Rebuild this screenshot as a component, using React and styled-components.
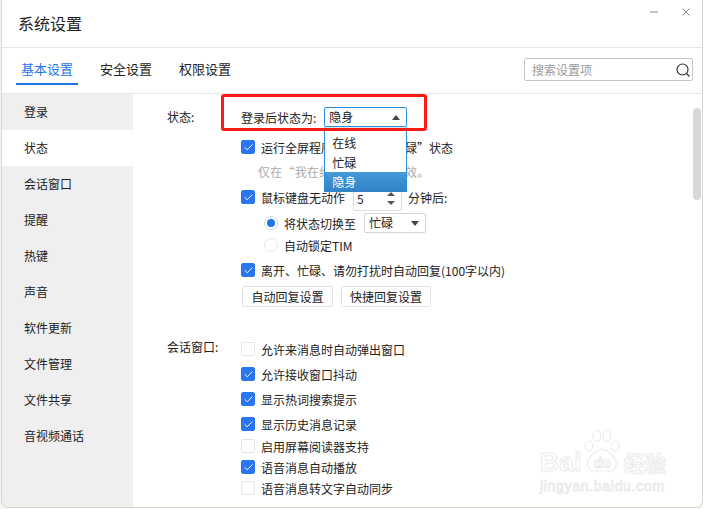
import React from 'react';
import styled, { createGlobalStyle } from 'styled-components';
import { Check } from 'lucide-react';

const GlobalStyle = createGlobalStyle`
  html, body {
    margin: 0;
    padding: 0;
    height: 100%;
    overflow: hidden;
    background: #f6f6f4;
  }
  * { box-sizing: border-box; }
`;

const Shell = styled.div`
  position: relative;
  width: 700px;
  height: 507px;
  margin-left: 2px;
  background: #fff;
  color: #222;
  font-family: "Noto Sans CJK SC", "Liberation Sans", sans-serif;
  font-size: 12px;
  overflow: hidden;
  border-radius: 0 0 6px 6px;
  box-shadow: 0 0 0 1px #d6d6cc;
  display: flex;
  flex-direction: column;
`;

const TitleBar = styled.div`
  height: 48px;
  flex: none;
  display: flex;
  align-items: flex-start;
  justify-content: space-between;
  border-bottom: 1px solid #e6e6e6;
`;

const Title = styled.div`
  font-size: 16px;
  line-height: 22px;
  margin: 12px 0 0 16px;
`;

const WinButtons = styled.div`
  display: flex;
  gap: 24px;
  margin: 8px 12px 0 0;
  color: #888;
`;

const TabBar = styled.div`
  height: 46px;
  flex: none;
  display: flex;
  border-bottom: 1px solid #e6e6e6;
  padding: 0 9px 0 14px;
`;

const Tab = styled.div`
  width: ${p => p.$w}px;
  margin-right: ${p => p.$gap}px;
  height: 37px;
  padding-top: 10px;
  font-size: 13px;
  line-height: 22px;
  text-align: center;
  color: ${p => (p.$active ? '#1f74e8' : '#222')};
  border-bottom: 2px solid ${p => (p.$active ? '#1f74e8' : 'transparent')};
`;

const SearchBox = styled.div`
  width: 169px;
  height: 23px;
  margin: 10px 0 0 auto;
  border: 1px solid #c6c6c6;
  border-radius: 2px;
  display: flex;
  align-items: center;
  justify-content: space-between;
  padding: 0 0 0 7px;
  color: #9a9a9a;
`;

const Body = styled.div`
  flex: 1;
  min-height: 0;
  display: flex;
`;

const Sidebar = styled.div`
  width: 131px;
  flex: none;
  background: #efefef;
`;

const SideItem = styled.div`
  height: 36px;
  line-height: 36px;
  padding-left: 22px;
  background: ${p => (p.$active ? '#fff' : 'transparent')};
`;

const Content = styled.div`
  flex: 1;
  position: relative;
  padding-top: 13px;
`;

const Section = styled.div`
  display: grid;
  grid-template-columns: 74px 1fr;
  padding-left: 34px;
  margin-top: ${p => p.$top || 0}px;
`;

const SectionLabel = styled.div`
  line-height: 20px;
  margin-top: ${p => p.$top || 0}px;
`;

const Options = styled.div`
  display: flex;
  flex-direction: column;
`;

const Row = styled.div`
  height: 20px;
  display: flex;
  align-items: center;
  margin-top: ${p => p.$top || 0}px;
  margin-left: ${p => p.$indent || 0}px;
`;

const Box = styled.span`
  width: 14px;
  height: 14px;
  flex: none;
  margin-right: 6px;
  border-radius: 2px;
  display: flex;
  align-items: center;
  justify-content: center;
  color: #fff;
  background: ${p => (p.$on ? '#2a76f2' : '#fff')};
  border: 1px solid ${p => (p.$on ? '#2a76f2' : '#e4e4e4')};
`;

const Radio = styled.span`
  width: 14px;
  height: 14px;
  flex: none;
  margin-right: 6px;
  border-radius: 50%;
  display: flex;
  align-items: center;
  justify-content: center;
  background: #fff;
  border: 1px solid ${p => (p.$on ? '#c9d9f5' : '#e6e6e6')};

  &::after {
    content: '';
    width: 8px;
    height: 8px;
    border-radius: 50%;
    background: ${p => (p.$on ? '#1f74e8' : 'transparent')};
  }
`;

const Hint = styled.span`
  color: #aaa;
  margin-left: 17px;
  letter-spacing: 0.25px;
`;

const Select = styled.div`
  position: relative;
  width: ${p => p.$w}px;
  height: 20px;
  margin-left: ${p => p.$left || 0}px;
  border: 1px solid ${p => (p.$open ? '#2a8fe0' : '#d4d4d4')};
  border-radius: 2px;
  display: flex;
  align-items: center;
  justify-content: space-between;
  padding: 0 6px 0 4px;
  line-height: 18px;
  background: #fff;
`;

const Caret = styled.span`
  width: 0;
  height: 0;
  border-left: 4.5px solid transparent;
  border-right: 4.5px solid transparent;
  ${p => (p.$up ? 'border-bottom: 5px solid #444;' : 'border-top: 5px solid #444;')}
`;

const DropList = styled.div`
  position: absolute;
  z-index: 3;
  top: 19px;
  left: -1px;
  width: 83px;
  height: 65px;
  padding-top: 5px;
  background: #fff;
  border: 1px solid #2a8fe0;
  border-top-color: #d8e6f2;
`;

const DropItem = styled.div`
  height: 19.5px;
  line-height: 19.5px;
  padding-left: 7px;
  color: ${p => (p.$active ? '#fff' : '#222')};
  background: ${p => (p.$active ? 'linear-gradient(#459ad8, #2f83c6)' : 'transparent')};
`;

const Spinner = styled.div`
  width: 49px;
  height: 25px;
  margin: 3px 6px 0 8px;
  border: 1px solid #dcdcdc;
  border-radius: 2px;
  display: flex;
  align-items: flex-start;
  justify-content: space-between;
  padding: 0 6px 0 3px;
  line-height: 23px;
  background: #fff;
`;

const SpinArrows = styled.span`
  display: flex;
  flex-direction: column;
  gap: 5px;
  margin-top: 5px;
`;

const SmallCaret = styled.span`
  width: 0;
  height: 0;
  border-left: 4px solid transparent;
  border-right: 4px solid transparent;
  ${p => (p.$up ? 'border-bottom: 4px solid #555;' : 'border-top: 4px solid #555;')}
`;

const Buttons = styled.div`
  display: flex;
  gap: 8px;
  margin: 6px 0 0 1px;
`;

const Btn = styled.div`
  width: ${p => p.$w}px;
  height: 21px;
  line-height: 19px;
  text-align: center;
  border: 1px solid #e2e2e2;
  border-radius: 2px;
`;

const Highlight = styled.div`
  position: absolute;
  z-index: 4;
  left: 88px;
  top: 0;
  width: 206px;
  height: 37px;
  border: 3px solid #fb1c14;
  border-radius: 3px;
  pointer-events: none;
`;

const ScrollThumb = styled.div`
  position: absolute;
  right: 1px;
  top: 14px;
  width: 8px;
  height: 92px;
  border-radius: 4px;
  background: #d8d8d8;
`;

const Watermark = styled.div`
  position: absolute;
  left: 538px;
  top: 449px;
  width: 130px;
  color: #fff;
  -webkit-text-stroke: 1px #ebebeb;
  pointer-events: none;
`;

const MarkTop = styled.div`
  display: flex;
  align-items: flex-end;
  font-family: "Liberation Sans", sans-serif;
  font-size: 26px;
  line-height: 26px;
  font-weight: 700;
  letter-spacing: 0.5px;
`;

const MarkBubble = styled.span`
  position: relative;
  width: 36px;
  height: 24px;
  margin-left: 2px;
  display: flex;
  align-items: center;
  justify-content: center;
  font-size: 14px;
  line-height: 24px;
  letter-spacing: 0;
`;

const MarkPaw = styled.svg`
  position: absolute;
  left: 0;
  top: -22px;
`;

const MarkCn = styled.span`
  font-family: "Noto Sans CJK SC", sans-serif;
  font-size: 21px;
  line-height: 26px;
  letter-spacing: 0;
  margin-left: 4px;
`;

const MarkUrl = styled.div`
  font-family: "Liberation Sans", sans-serif;
  font-size: 14px;
  line-height: 16px;
  letter-spacing: 0.7px;
  margin-top: 3px;
`;

const sideItems = ['登录', '状态', '会话窗口', '提醒', '热键', '声音', '软件更新', '文件管理', '文件共享', '音视频通话'];

const chatOptions = [
  { text: '允许来消息时自动弹出窗口', on: false, top: 0 },
  { text: '允许接收窗口抖动', on: true, top: 5 },
  { text: '显示热词搜索提示', on: true, top: 5 },
  { text: '显示历史消息记录', on: true, top: 5 },
  { text: '启用屏幕阅读器支持', on: false, top: 2 },
  { text: '语音消息自动播放', on: true, top: 1 },
  { text: '语音消息转文字自动同步', on: false, top: 1 },
];

function CheckBox({ on }) {
  return <Box $on={on}>{on && <Check size={11} strokeWidth={2} />}</Box>;
}

export default function App() {
  return (
    <Shell>
      <GlobalStyle />
      <TitleBar>
        <Title>系统设置</Title>
        <WinButtons>
          <svg width="8" height="8" viewBox="0 0 8 8"><path d="M0 4h8" stroke="currentColor" fill="none" /></svg>
          <svg width="8" height="8" viewBox="0 0 8 8"><path d="M.5.5l7 7M7.5.5l-7 7" stroke="currentColor" fill="none" /></svg>
        </WinButtons>
      </TitleBar>
      <TabBar>
        <Tab $w={62} $gap={20} $active>基本设置</Tab>
        <Tab $w={56} $gap={23}>安全设置</Tab>
        <Tab $w={56} $gap={0}>权限设置</Tab>
        <SearchBox>
          搜索设置项
          <svg width="18" height="18" viewBox="0 0 18 18" fill="none" stroke="#333" strokeWidth="1.2">
            <circle cx="8.5" cy="8.5" r="5.5" />
            <path d="M12.5 12.5l3 3" />
          </svg>
        </SearchBox>
      </TabBar>
      <Body>
        <Sidebar>
          {sideItems.map((item) => (
            <SideItem key={item} $active={item === '状态'}>{item}</SideItem>
          ))}
        </Sidebar>
        <Content>
          <Highlight />
          <ScrollThumb />
          <Section>
            <SectionLabel>状态:</SectionLabel>
            <Options>
              <Row>
                登录后状态为:
                <Select $w={83} $left={8} $open>
                  隐身
                  <Caret $up />
                  <DropList>
                    <DropItem>在线</DropItem>
                    <DropItem>忙碌</DropItem>
                    <DropItem $active>隐身</DropItem>
                  </DropList>
                </Select>
              </Row>
              <Row $top={10}><CheckBox on />运行全屏程序时切换为“忙碌”状态</Row>
              <Row $top={4}><Hint>仅在“我在线上”状态下有效。</Hint></Row>
              <Row $top={6}>
                <CheckBox on />鼠标键盘无动作
                <Spinner>
                  5
                  <SpinArrows><SmallCaret $up /><SmallCaret /></SpinArrows>
                </Spinner>
                分钟后:
              </Row>
              <Row $top={6} $indent={23}>
                <Radio $on />将状态切换至
                <Select $w={62} $left={8}>忙碌<Caret /></Select>
              </Row>
              <Row $top={2} $indent={23}><Radio />自动锁定TIM</Row>
              <Row $top={5}><CheckBox on />离开、忙碌、请勿打扰时自动回复(100字以内)</Row>
              <Buttons>
                <Btn $w={91}>自动回复设置</Btn>
                <Btn $w={90}>快捷回复设置</Btn>
              </Buttons>
            </Options>
          </Section>
          <Section $top={32}>
            <SectionLabel $top={-2}>会话窗口:</SectionLabel>
            <Options>
              {chatOptions.map((opt) => (
                <Row key={opt.text} $top={opt.top}>
                  <CheckBox on={opt.on} />{opt.text}
                </Row>
              ))}
            </Options>
          </Section>
        </Content>
      </Body>
      <Watermark>
        <MarkTop>
          Bai
          <MarkBubble>
            <MarkPaw width="36" height="46" viewBox="0 0 36 46" fill="none" stroke="#ebebeb" strokeWidth="1.2">
              <ellipse cx="5" cy="17" rx="3.8" ry="5" />
              <ellipse cx="13" cy="7" rx="4" ry="5.5" />
              <ellipse cx="23" cy="7" rx="4" ry="5.5" />
              <ellipse cx="31" cy="17" rx="3.8" ry="5" />
              <path d="M18 20c5 0 8 4 12 8 4 5 3 14-5 14H11C3 42 2 33 6 28c4-4 7-8 12-8z" />
            </MarkPaw>
            du
          </MarkBubble>
          <MarkCn>经验</MarkCn>
        </MarkTop>
        <MarkUrl>jingyan.baidu.com</MarkUrl>
      </Watermark>
    </Shell>
  );
}
